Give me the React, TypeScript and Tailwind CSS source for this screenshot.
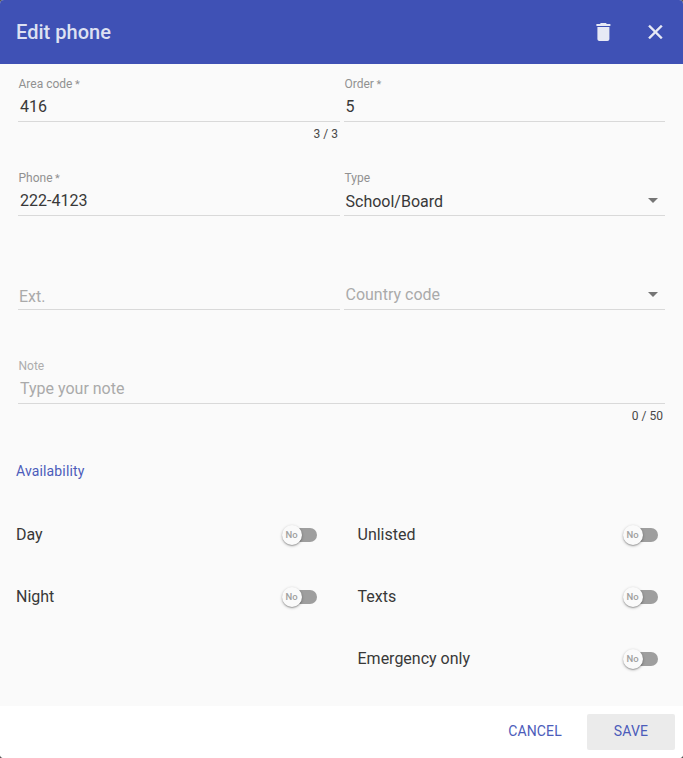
import type { ReactNode } from "react";

type FieldProps = {
  label?: string;
  required?: boolean;
  value?: string;
  placeholder?: string;
  counter?: string;
  select?: boolean;
  faded?: boolean;
  valueClass?: string;
};

function Field({ label, required, value, placeholder, counter, select, faded, valueClass = "pl-0.5 pb-0.5" }: FieldProps) {
  return (
    <div className="flex h-[94px] flex-col">
      <div className={`h-5 pl-[0.5px] text-[12px] leading-5 ${faded ? "text-[#adadad]" : "text-[#919191]"}`}>
        {label}
        {required && <span className="ml-[2.5px] text-[11px]">*</span>}
      </div>
      <div className="flex h-7 items-center border-b border-[#d9d9d9]">
        <div className={`flex-1 text-[16px] leading-[26px] ${value ? "text-[#383838]" : "text-[#aaaaaa]"} ${valueClass}`}>
          {value ?? placeholder}
        </div>
        {select && (
          <svg className="mr-[7px] mb-[3px] h-[5px] w-[10px]" viewBox="0 0 10 5">
            <path d="M0 0h10L5 5z" fill="#757575" />
          </svg>
        )}
      </div>
      <div className="h-6 pr-0.5 text-right text-[12px] leading-6 text-[#484848]">{counter}</div>
    </div>
  );
}

function Toggle({ label }: { label: string }) {
  return (
    <div className="flex h-[62px] items-center justify-between">
      <span className="text-[16px] leading-6 text-[#383838]">{label}</span>
      <div className="flex items-center">
        <div className="z-10 flex h-5 w-5 items-center justify-center rounded-full bg-[#fafafa] pr-px pb-px text-[9.5px] leading-none font-medium text-[#9f9f9f] shadow-[0_1px_3px_rgba(0,0,0,0.3),0_1px_1px_rgba(0,0,0,0.18)]">
          No
        </div>
        <div className="-ml-[15px] h-3.5 w-[30px] rounded-full bg-[#9e9e9e]" />
      </div>
    </div>
  );
}

function IconButton({ children, label }: { children: ReactNode; label: string }) {
  return (
    <button aria-label={label} className="flex h-10 w-10 items-center justify-center text-[#e7e9f5]">
      <svg className="h-6 w-6" viewBox="0 0 24 24" fill="currentColor">{children}</svg>
    </button>
  );
}

export default function App() {
  return (
    <div className="bg-[#555]">
      <div className="flex h-[758px] w-[683px] flex-col overflow-hidden rounded-[4px] bg-white font-[Roboto,sans-serif]">
        <header className="flex h-16 items-center justify-between bg-[#3f51b5] pr-2 pl-4">
          <h1 className="text-[20px] leading-6 font-medium tracking-[0.03px] text-[#dde1f2]">Edit phone</h1>
          <div className="flex gap-3">
            <IconButton label="Delete">
              <path transform="translate(.4 0)" d="M6 19c0 1.1.9 2 2 2h8c1.1 0 2-.9 2-2V7H6v12zM19 4h-3.5l-1-1h-5l-1 1H5v2h14V4z" />
            </IconButton>
            <IconButton label="Close">
              <path transform="translate(.4 0)" stroke="currentColor" strokeWidth="0.4" d="M19 6.41L17.59 5 12 10.59 6.41 5 5 6.41 10.59 12 5 17.59 6.41 19 12 13.41 17.59 19 19 17.59 13.41 12 19 6.41z" />
            </IconButton>
          </div>
        </header>
        <main className="h-[642px] bg-[#fafafa] pt-2.5">
          <section className="px-[18px]">
            <div className="grid grid-cols-[322px_321px] gap-x-1">
              <Field label="Area code" required value="416" counter="3 / 3" />
              <Field label="Order" required value="5" valueClass="pl-[1.5px] pb-0.5" />
              <Field label="Phone" required value="222-4123" />
              <Field label="Type" value="School/Board" select valueClass="pl-[1.5px]" />
              <Field placeholder="Ext." valueClass="pl-px pt-[3px]" />
              <Field placeholder="Country code" select valueClass="pl-[1.5px] pb-0.5" />
            </div>
            <Field label="Note" placeholder="Type your note" counter="0 / 50" faded />
          </section>
          <h2 className="mt-[11px] mb-[23px] pl-4 text-[14px] leading-5 tracking-[0.14px] text-[#4c5cba]">Availability</h2>
          <section className="grid grid-cols-[301px_300.5px] gap-x-[40.5px] pl-4">
            <div>
              <Toggle label="Day" />
              <Toggle label="Night" />
            </div>
            <div>
              <Toggle label="Unlisted" />
              <Toggle label="Texts" />
              <Toggle label="Emergency only" />
            </div>
          </section>
        </main>
        <footer className="flex h-[52px] items-center justify-end gap-2 bg-white pr-2 text-[14px] tracking-[0.14px] text-[#4c5cba]">
          <button className="h-9 w-[88px] rounded-[2px] pb-0.5">CANCEL</button>
          <button className="h-9 w-[88px] rounded-[2px] bg-[#ebebeb] pb-0.5">SAVE</button>
        </footer>
      </div>
    </div>
  );
}
